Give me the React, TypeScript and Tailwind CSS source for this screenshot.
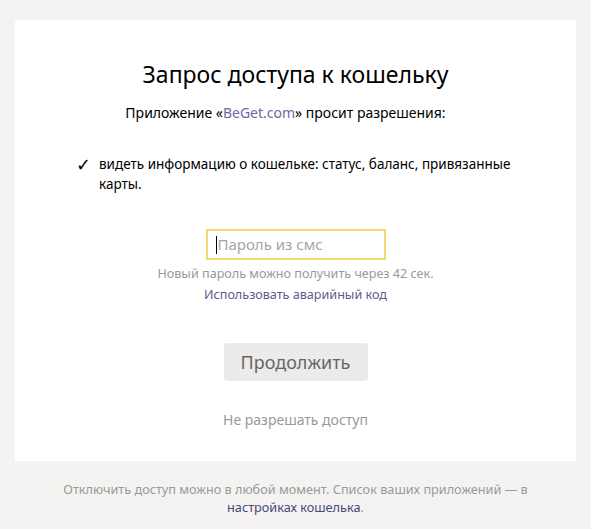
export default function App() {
  return (
    <div className="min-h-[529px] bg-[#f4f3f1] pt-[20px] font-['Noto_Sans',sans-serif]">
      <div className="mx-[15px] bg-white pt-[40px] pb-[31px] flex flex-col items-center">
        <h1 className="text-[23px] leading-[29px] font-normal text-black">Запрос доступа к кошельку</h1>
        <p className="mt-[14px] mr-[20px] text-[14px] leading-[20px] text-black">
          Приложение «<a className="text-[#6b69a3]">BeGet.com</a>» просит разрешения:
        </p>

        <div className="mt-[31px] w-full pl-[61px]">
          <div className="flex">
            <span className="w-[23px] shrink-0 text-[18px] leading-[20px] text-black">✓</span>
            <p className="w-[430px] shrink-0 text-[13.5px] leading-[20px] text-black">
              видеть информацию о кошельке: статус, баланс, привязанные карты.
            </p>
          </div>
        </div>

        <div className="mt-[35px] flex h-[31px] w-[180px] items-center border-2 border-[#f7da6b] px-[8px]">
          <span className="h-[18px] w-px bg-black" />
          <span className="ml-px text-[15px] text-[#a6a6a6]">Пароль из смс</span>
        </div>
        <p className="mt-[5px] text-[12.6px] leading-[18px] text-[#999]">
          Новый пароль можно получить через 42 сек.
        </p>
        <a className="mt-[3px] text-[12.6px] leading-[18px] text-[#5c5b8d]">Использовать аварийный код</a>

        <button
          type="button"
          className="mt-[39px] h-[38px] w-[144px] rounded-[3px] bg-[#ebebeb] text-[18px] text-[#666]"
        >
          Продолжить
        </button>

        <a className="mt-[29px] text-[14px] leading-[20px] text-[#999]">Не разрешать доступ</a>
      </div>

      <p className="mx-auto mt-[19px] w-[480px] text-center text-[12.7px] leading-[18px] text-[#999]">
        Отключить доступ можно в любой момент. Список ваших приложений — в{" "}
        <a className="text-[#48477b]">настройках кошелька</a>.
      </p>
    </div>
  );
}
